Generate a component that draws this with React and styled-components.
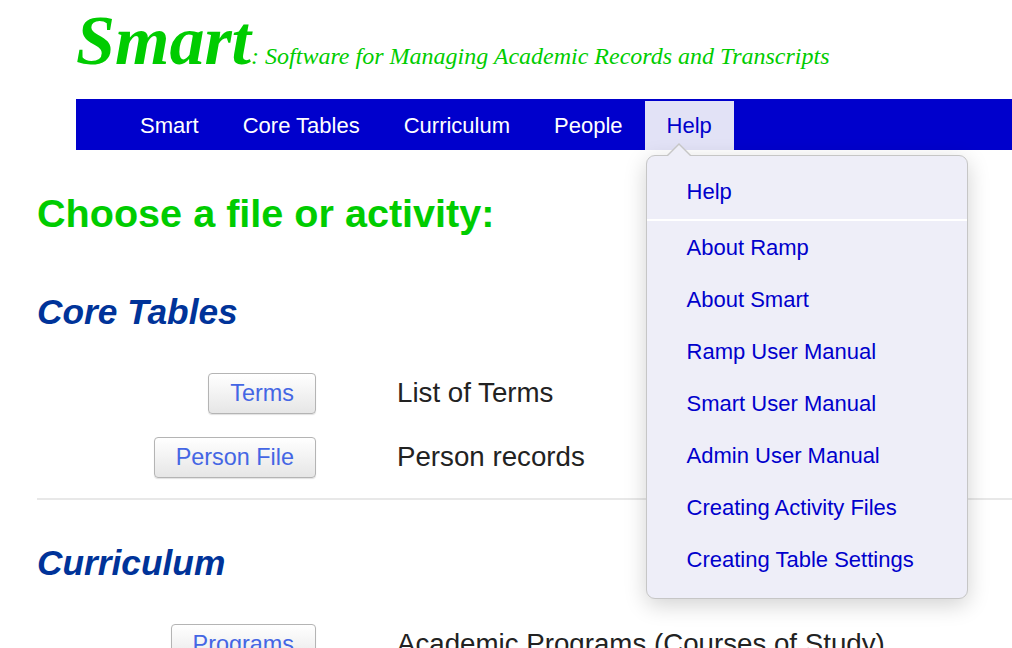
import React from 'react';
import styled, { createGlobalStyle } from 'styled-components';

const GlobalStyle = createGlobalStyle`
  html, body {
    margin: 0;
    padding: 0;
    background: #fff;
    overflow: hidden;
  }
  body {
    font-family: "Liberation Sans", Arial, Helvetica, sans-serif;
  }
`;

const Page = styled.div`
  width: 1012px;
  height: 648px;
  overflow: hidden;
`;

const Header = styled.header`
  height: 99px;
  padding: 6px 0 0 76px;
  box-sizing: border-box;
`;

const Title = styled.div`
  display: flex;
  align-items: baseline;
  color: #00cc00;
  font-family: "Liberation Serif", "Times New Roman", serif;
  font-style: italic;
  line-height: 1;
`;

const Logo = styled.span`
  font-size: 70px;
  font-weight: bold;
`;

const Tagline = styled.span`
  font-size: 24px;
`;

const Nav = styled.nav`
  margin-left: 76px;
  height: 51px;
  padding: 2px 0 0 42px;
  box-sizing: border-box;
  background: #0000cc;
  display: flex;
`;

const NavItem = styled.div`
  position: relative;
  padding: 0 22px;
  height: 49px;
  line-height: 49px;
  font-size: 22px;
  color: ${p => (p.$active ? '#0000cc' : '#fff')};
  background: ${p => (p.$active ? '#e2e2f6' : 'transparent')};
`;

const Menu = styled.div`
  position: absolute;
  left: 1px;
  top: calc(100% + 5px);
  width: 320px;
  padding: 10px 0 12px;
  background: #eeeef8;
  border: 1px solid #c6c6c6;
  border-radius: 9px;
  box-shadow: 0 6px 22px rgba(0, 0, 0, 0.18);
  z-index: 10;

  &::before,
  &::after {
    content: '';
    position: absolute;
    width: 0;
    height: 0;
    border-style: solid;
    border-color: transparent;
  }
  &::before {
    left: 19px;
    top: -13px;
    border-width: 0 13px 13px 13px;
    border-bottom-color: #c6c6c6;
  }
  &::after {
    left: 20px;
    top: -11px;
    border-width: 0 12px 12px 12px;
    border-bottom-color: #eeeef8;
  }
`;

const MenuItem = styled.div`
  height: 52px;
  line-height: 52px;
  padding-left: 40px;
  font-size: 22px;
  color: #0000cc;
  white-space: nowrap;
`;

const MenuDivider = styled.div`
  height: 2px;
  margin: 1px 0 1px;
  background: #fff;
`;

const Main = styled.main`
  padding-left: 37px;
`;

const Heading = styled.h1`
  margin: 40px 0 0;
  font-size: 39.6px;
  line-height: 46px;
  font-weight: bold;
  color: #00cc00;
`;

const Section = styled.h2`
  margin: ${p => p.$top}px 0 29px;
  font-size: 35.3px;
  line-height: 40px;
  font-weight: bold;
  font-style: italic;
  color: #003399;
`;

const Row = styled.div`
  display: grid;
  grid-template-columns: 279px 1fr;
  column-gap: 81px;
  align-items: center;
  height: 64px;
`;

const ButtonCell = styled.div`
  display: flex;
  justify-content: flex-end;
`;

const Button = styled.button`
  height: 41px;
  padding: 0 21px;
  font-family: "Liberation Sans", Arial, sans-serif;
  font-size: 23.4px;
  color: #4466e4;
  background: linear-gradient(#ffffff, #e6e6e6);
  border: 1px solid #b4b4b4;
  border-radius: 4px;
  box-shadow: 0 1px 1px rgba(0, 0, 0, 0.12);
`;

const Desc = styled.div`
  font-size: 27.7px;
  color: #222;
  white-space: nowrap;
`;

const Rule = styled.hr`
  margin: 9px 0 0;
  border: none;
  height: 2px;
  background: #e8e8e8;
`;

const navItems = ['Smart', 'Core Tables', 'Curriculum', 'People'];
const helpItems = [
  'About Ramp',
  'About Smart',
  'Ramp User Manual',
  'Smart User Manual',
  'Admin User Manual',
  'Creating Activity Files',
  'Creating Table Settings',
];

function Entry({ label, text }) {
  return (
    <Row>
      <ButtonCell>
        <Button>{label}</Button>
      </ButtonCell>
      <Desc>{text}</Desc>
    </Row>
  );
}

export default function App() {
  return (
    <Page>
      <GlobalStyle />
      <Header>
        <Title>
          <Logo>Smart</Logo>
          <Tagline>: Software for Managing Academic Records and Transcripts</Tagline>
        </Title>
      </Header>
      <Nav>
        {navItems.map(n => (
          <NavItem key={n}>{n}</NavItem>
        ))}
        <NavItem $active>
          Help
          <Menu>
            <MenuItem>Help</MenuItem>
            <MenuDivider />
            {helpItems.map(h => (
              <MenuItem key={h}>{h}</MenuItem>
            ))}
          </Menu>
        </NavItem>
      </Nav>
      <Main>
        <Heading>Choose a file or activity:</Heading>
        <Section $top={56}>Core Tables</Section>
        <Entry label="Terms" text="List of Terms" />
        <Entry label="Person File" text="Person records" />
        <Rule />
        <Section $top={43}>Curriculum</Section>
        <Entry label="Programs" text="Academic Programs (Courses of Study)" />
      </Main>
    </Page>
  );
}
